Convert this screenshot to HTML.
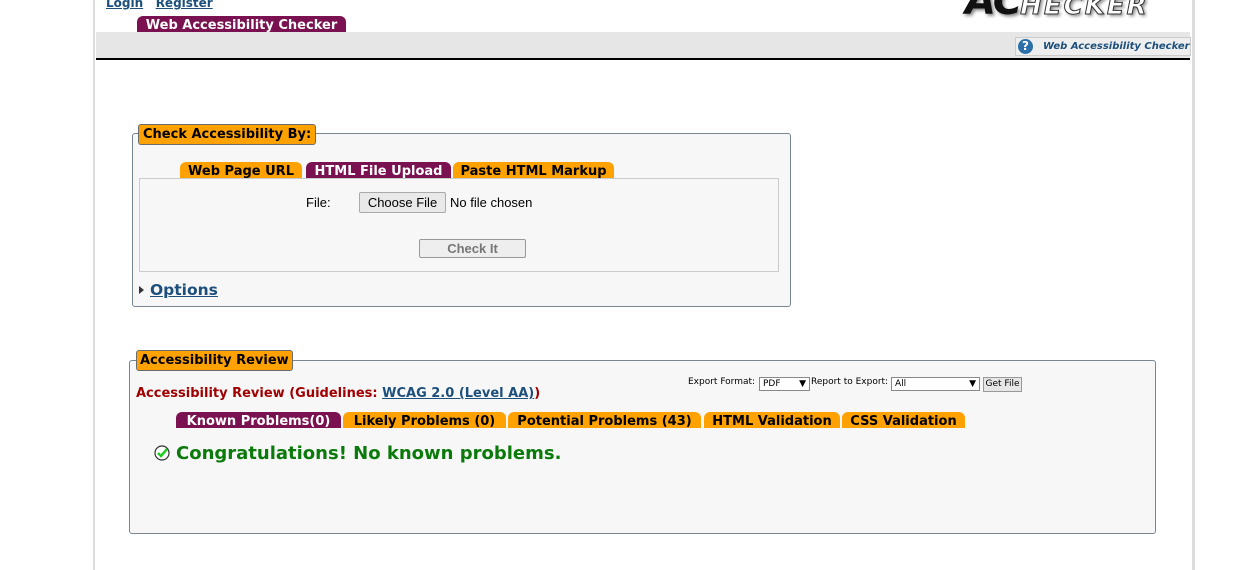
<!DOCTYPE html>
<html><head><style>
body{margin:0;width:1260px;height:570px;background:#fff;position:relative;overflow:hidden;font-family:"DejaVu Sans",Verdana,sans-serif}
.a{position:absolute}
.tab{position:absolute;height:16px;line-height:19px;font-weight:bold;font-size:13px;color:#000;background:#ffa200;border-radius:6px 6px 0 0;text-align:center;white-space:nowrap;overflow:hidden}
.m{background:#7a1150;color:#fff}
.leg{position:absolute;background:#ffa200;border:1px solid #6b6b6b;border-radius:3px;font-weight:bold;font-size:13px;height:19px;line-height:20px;padding:0 4px}
a{color:#1d4f7c}
</style></head><body>
<div class="a" style="left:93px;top:0;width:2px;height:570px;background:#ddd"></div>
<div class="a" style="left:1192px;top:0;width:3px;height:570px;background:#ddd"></div>
<div class="a" style="left:106px;top:-4px;font-size:12px;font-weight:bold"><a href="#">Login</a>&nbsp;&nbsp;&nbsp;<a href="#">Register</a></div>
<div class="a" style="left:965px;top:-22px;font-size:40px;font-weight:bold;font-style:italic;color:#111;letter-spacing:-2px;text-shadow:2px 2px 3px #888">AC<span style="font-size:26px;color:#fff;-webkit-text-stroke:1px #333;letter-spacing:2px">HECKER</span></div>
<div class="a" style="left:96px;top:32px;width:1094px;height:26px;background:#e6e6e6;border-bottom:2px solid #000"></div>
<div class="tab m" style="left:137px;top:16px;width:209px;height:16px;line-height:19px;font-size:13px">Web Accessibility Checker</div>
<div class="a" style="left:1015px;top:37px;width:174px;height:17px;background:#eee;border:1px solid #ccc;font-size:10px;font-weight:bold;font-style:italic;color:#1d4f7c;line-height:17px">
<span style="position:absolute;left:2px;top:1px;width:15px;height:15px;border-radius:50%;background:#2a6fa8;color:#fff;font-style:normal;text-align:center;line-height:15px;font-size:12px">?</span>
<span style="position:absolute;left:27px">Web Accessibility Checker</span></div>

<div class="a" style="left:132px;top:133px;width:657px;height:172px;border:1px solid #7a8592;border-radius:3px;background:#f7f7f7"></div>
<div class="leg" style="left:138px;top:124px">Check Accessibility By:</div>
<div class="tab" style="left:180px;top:162px;width:122px">Web Page URL</div>
<div class="tab m" style="left:306px;top:162px;width:145px">HTML File Upload</div>
<div class="tab" style="left:453px;top:162px;width:161px">Paste HTML Markup</div>
<div class="a" style="left:139px;top:178px;width:638px;height:92px;border:1px solid #ccc;background:#f7f7f7"></div>
<div class="a" style="left:306px;top:195px;font-family:'Liberation Sans',Arial;font-size:13px">File:</div>
<div class="a" style="left:359px;top:192px;width:85px;height:19px;border:1px solid #aaa;background:#e9e9e9;font-family:'Liberation Sans',Arial;font-size:13px;text-align:center;line-height:19px;border-radius:2px">Choose File</div>
<div class="a" style="left:450px;top:195px;font-family:'Liberation Sans',Arial;font-size:13px">No file chosen</div>
<div class="a" style="left:419px;top:239px;width:105px;height:17px;border:1px solid #999;background:#eee;border-radius:2px;font-family:'Liberation Sans',Arial;font-size:13px;font-weight:bold;color:#777;text-align:center;line-height:17px">Check It</div>
<div class="a" style="left:139px;top:286px;width:0;height:0;border-left:5px solid #333;border-top:4px solid transparent;border-bottom:4px solid transparent"></div>
<div class="a" style="left:150px;top:281px;font-size:15.5px;font-weight:bold"><a href="#">Options</a></div>

<div class="a" style="left:129px;top:360px;width:1025px;height:172px;border:1px solid #7a8592;border-radius:3px;background:#f7f7f7"></div>
<div class="leg" style="left:136px;top:350px;padding:0 3px">Accessibility Review</div>
<div class="a" style="left:136px;top:386px;font-size:13px;font-weight:bold;color:#a00000">Accessibility Review (Guidelines: <a href="#">WCAG 2.0 (Level AA)</a>)</div>
<div class="a" style="left:688px;top:377px;font-size:9px">Export Format:</div>
<div class="a" style="left:759px;top:377px;width:46px;height:12px;border:1px solid #888;background:#fff;font-size:9px;line-height:12px;padding-left:3px">PDF<span style="position:absolute;right:3px">▼</span></div>
<div class="a" style="left:811px;top:377px;font-size:9px">Report to Export:</div>
<div class="a" style="left:891px;top:377px;width:84px;height:12px;border:1px solid #888;background:#fff;font-size:9px;line-height:12px;padding-left:3px">All<span style="position:absolute;right:3px">▼</span></div>
<div class="a" style="left:983px;top:377px;width:37px;height:13px;border:1px solid #999;background:#e6e6e6;font-size:9px;line-height:13px;text-align:center">Get File</div>
<div class="tab m" style="left:176px;top:412px;width:165px">Known Problems(0)</div>
<div class="tab" style="left:343px;top:412px;width:163px">Likely Problems (0)</div>
<div class="tab" style="left:508px;top:412px;width:193px">Potential Problems (43)</div>
<div class="tab" style="left:704px;top:412px;width:136px">HTML Validation</div>
<div class="tab" style="left:842px;top:412px;width:123px">CSS Validation</div>
<svg class="a" style="left:154px;top:445px" width="16" height="16" viewBox="0 0 16 16"><circle cx="8" cy="8" r="7" fill="#fff" stroke="#333" stroke-width="1.2"/><path d="M4 8l3 3 6-7" fill="none" stroke="#2c2" stroke-width="2.5"/></svg>
<div class="a" style="left:176px;top:443px;font-size:18px;font-weight:bold;color:#0a7a0a">Congratulations! No known problems.</div>
</body></html>
